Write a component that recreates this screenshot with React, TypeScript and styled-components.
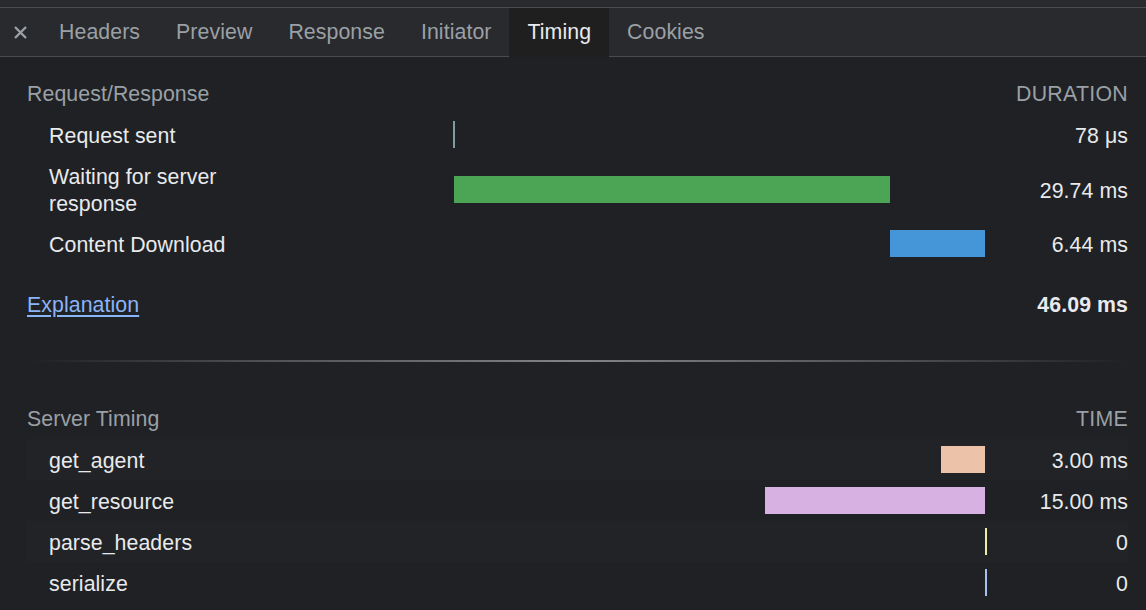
import React from "react";
import styled, { createGlobalStyle } from "styled-components";

const GlobalStyle = createGlobalStyle`
  html, body {
    margin: 0;
    padding: 0;
    background: #202124;
  }
  body {
    font-family: "Liberation Sans", Arial, Helvetica, sans-serif;
    font-size: 21.3px;
    letter-spacing: 0.08px;
    color: #e8eaed;
    -webkit-font-smoothing: antialiased;
  }
`;

const Page = styled.div`
  width: 1146px;
  height: 610px;
  overflow: hidden;
  background: #202124;
  display: flex;
  flex-direction: column;
`;

const TopStrip = styled.div`
  height: 7px;
  background: #292a2d;
  border-bottom: 1px solid #4a4c50;
`;

const TabBar = styled.div`
  height: 48px;
  display: flex;
  align-items: stretch;
  background: #292a2d;
  border-bottom: 1px solid #4a4c50;
`;

const CloseButton = styled.div`
  width: 41px;
  display: flex;
  align-items: center;
  justify-content: center;
  color: #9aa0a6;
`;

const Tab = styled.div<{ $active?: boolean }>`
  padding: 0 18px;
  display: flex;
  align-items: center;
  color: ${(p) => (p.$active ? "#e8eaed" : "#9aa0a6")};
  background: ${(p) => (p.$active ? "#1f1f1f" : "transparent")};
  margin-bottom: -1px;
  padding-bottom: 1px;
`;

const Content = styled.div`
  padding: 16px 18px 0 27px;
  display: flex;
  flex-direction: column;
`;

const Row = styled.div<{ $shade?: boolean }>`
  display: grid;
  grid-template-columns: 426px 1fr 143px;
  align-items: center;
  line-height: 27px;
  background: ${(p) => (p.$shade ? "#222326" : "transparent")};
`;

const HeaderRow = styled(Row)`
  height: 41px;
  padding-top: 1px;
  box-sizing: border-box;
  color: #9aa0a6;
`;

const HeaderLabel = styled.div`
  grid-column: 1 / 3;
`;

const HeaderRight = styled.div`
  text-align: right;
  letter-spacing: 0.3px;
`;

const DataRow = styled(Row)`
  padding: 7px 0;
`;

/* text cells sit 2px lower in their line, like the reference's font */
const TextCell = styled.div`
  padding-top: 2px;
  margin-bottom: -2px;
`;

const Label = styled(TextCell)`
  padding-left: 22px;
  max-width: 210px;
`;

const Track = styled.div`
  position: relative;
  height: 27px;
  align-self: center;
`;

const Bar = styled.div<{ $color: string }>`
  position: absolute;
  top: 0;
  bottom: 0;
  min-width: 2px;
  background: ${(p) => p.$color};
`;

const Value = styled(TextCell)<{ $bold?: boolean }>`
  text-align: right;
  font-weight: ${(p) => (p.$bold ? 700 : 400)};
`;

const TotalRow = styled(Row)`
  height: 41px;
  margin-top: 19px;
`;

const TotalLabel = styled(TextCell)`
  grid-column: 1 / 3;
`;

const Link = styled.a`
  color: #8ab4f8;
  text-decoration: underline;
  text-underline-offset: 3px;
  cursor: pointer;
`;

const Divider = styled.div`
  height: 2px;
  margin: 36px 0 36px 2px;
  background: linear-gradient(
    90deg,
    rgba(140, 141, 144, 0) 0%,
    rgba(140, 141, 144, 0.55) 20%,
    rgba(170, 171, 174, 0.95) 50%,
    rgba(140, 141, 144, 0.55) 80%,
    rgba(140, 141, 144, 0) 100%
  );
  transform: scaleY(0.75);
`;

const TOTAL = 36.26;

type Entry = {
  label: string;
  start: number;
  dur: number;
  color: string;
  value: string;
};

const requestEntries: Entry[] = [
  { label: "Request sent", start: 0, dur: 0.078, color: "#7f9ca1", value: "78 μs" },
  { label: "Waiting for server response", start: 0.078, dur: 29.74, color: "#4ca554", value: "29.74 ms" },
  { label: "Content Download", start: 29.818, dur: 6.44, color: "#4496d8", value: "6.44 ms" },
];

const serverEntries: Entry[] = [
  { label: "get_agent", start: TOTAL - 3, dur: 3, color: "#ecc3a9", value: "3.00 ms" },
  { label: "get_resource", start: TOTAL - 15, dur: 15, color: "#d7b1e2", value: "15.00 ms" },
  { label: "parse_headers", start: TOTAL, dur: 0, color: "#eeeaa8", value: "0" },
  { label: "serialize", start: TOTAL, dur: 0, color: "#a8c0ec", value: "0" },
];

function TimingBar({ e }: { e: Entry }) {
  const left = (Math.min(e.start, TOTAL) / TOTAL) * 100;
  const width = (e.dur / TOTAL) * 100;
  return (
    <Track>
      <Bar $color={e.color} style={{ left: `${left}%`, width: `${width}%` }} />
    </Track>
  );
}

function CloseIcon() {
  return (
    <svg width="13" height="13" viewBox="0 0 13 13">
      <path d="M1 1 L12 12 M12 1 L1 12" stroke="#9aa0a6" strokeWidth="2.4" strokeLinecap="butt" />
    </svg>
  );
}

export default function App() {
  const tabs = ["Headers", "Preview", "Response", "Initiator", "Timing", "Cookies"];
  return (
    <>
      <GlobalStyle />
      <Page>
        <TopStrip />
        <TabBar>
          <CloseButton>
            <CloseIcon />
          </CloseButton>
          {tabs.map((t) => (
            <Tab key={t} $active={t === "Timing"}>
              {t}
            </Tab>
          ))}
        </TabBar>
        <Content>
          <HeaderRow>
            <HeaderLabel>Request/Response</HeaderLabel>
            <HeaderRight>DURATION</HeaderRight>
          </HeaderRow>
          {requestEntries.map((e) => (
            <DataRow key={e.label}>
              <Label>{e.label}</Label>
              <TimingBar e={e} />
              <Value>{e.value}</Value>
            </DataRow>
          ))}
          <TotalRow>
            <TotalLabel>
              <Link>Explanation</Link>
            </TotalLabel>
            <Value $bold>46.09 ms</Value>
          </TotalRow>
          <Divider />
          <HeaderRow>
            <HeaderLabel>Server Timing</HeaderLabel>
            <HeaderRight>TIME</HeaderRight>
          </HeaderRow>
          {serverEntries.map((e, i) => (
            <DataRow key={e.label} $shade={i % 2 === 0}>
              <Label>{e.label}</Label>
              <TimingBar e={e} />
              <Value>{e.value}</Value>
            </DataRow>
          ))}
        </Content>
      </Page>
    </>
  );
}
